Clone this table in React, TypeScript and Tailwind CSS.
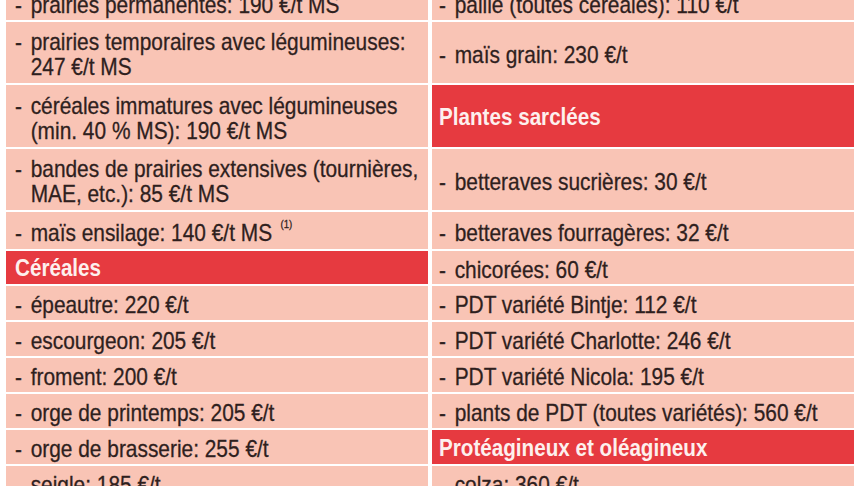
import React from "react";

type Cell =
  | { kind: "item"; lines: React.ReactNode[] }
  | { kind: "head"; text: string };

const item = (...lines: React.ReactNode[]): Cell => ({ kind: "item", lines });
const head = (text: string): Cell => ({ kind: "head", text });

const rowHeights = ["h-[34px]", "h-[61px]", "h-[62px]", "h-[61px]", "h-[37px]", "h-[33px]", "h-[34px]", "h-[34px]", "h-[34px]", "h-[34px]", "h-[34px]", "h-[34px]"];

const left: Cell[] = [
  item("prairies permanentes: 190 €/t MS"),
  item("prairies temporaires avec légumineuses:", "247 €/t MS"),
  item("céréales immatures avec légumineuses", "(min. 40 % MS): 190 €/t MS"),
  item("bandes de prairies extensives (tournières,", "MAE, etc.): 85 €/t MS"),
  item(
    <>
      maïs ensilage: 140 €/t MS <sup className="text-[11px] align-[7px] ml-[3px]">(1)</sup>
    </>
  ),
  head("Céréales"),
  item("épeautre: 220 €/t"),
  item("escourgeon: 205 €/t"),
  item("froment: 200 €/t"),
  item("orge de printemps: 205 €/t"),
  item("orge de brasserie: 255 €/t"),
  item("seigle: 185 €/t"),
];

const right: Cell[] = [
  item("paille (toutes céréales): 110 €/t"),
  item("maïs grain: 230 €/t"),
  head("Plantes sarclées"),
  item("betteraves sucrières: 30 €/t"),
  item("betteraves fourragères: 32 €/t"),
  item("chicorées: 60 €/t"),
  item("PDT variété Bintje: 112 €/t"),
  item("PDT variété Charlotte: 246 €/t"),
  item("PDT variété Nicola: 195 €/t"),
  item("plants de PDT (toutes variétés): 560 €/t"),
  head("Protéagineux et oléagineux"),
  item("colza: 360 €/t"),
];

function TableCell({ cell, h, pad }: { cell: Cell; h: string; pad: string }) {
  if (cell.kind === "head") {
    return (
      <div className={`${h} ${pad} flex items-center bg-[#e63a40] text-[#fdf0ee] font-bold text-[24px] leading-[25px]`}>
        <span className="scale-x-[0.86] origin-left whitespace-nowrap">{cell.text}</span>
      </div>
    );
  }
  return (
    <div className={`${h} ${pad} pt-[3px] flex items-center bg-[#f9c4b5] text-[#2f1f1e] text-[24px] [-webkit-text-stroke:0.3px_#2f1f1e]`}>
      <div className="flex leading-[25px] whitespace-nowrap scale-x-[0.87] origin-left">
        <span className="w-[18px] shrink-0">-</span>
        <span>
          {cell.lines.map((l, i) => (
            <React.Fragment key={i}>
              {i > 0 && <br />}
              {l}
            </React.Fragment>
          ))}
        </span>
      </div>
    </div>
  );
}

export default function App() {
  return (
    <main
      className="w-[864px] h-[486px] overflow-hidden bg-white"
      style={{ fontFamily: '"Liberation Sans", Arial, sans-serif' }}
    >
      <div className="mt-[-14px] ml-[6px] grid grid-cols-[422px_422px] gap-x-[4px] gap-y-[2px]">
        {left.map((c, i) => (
          <React.Fragment key={i}>
            <TableCell cell={c} h={rowHeights[i]} pad="pl-[9px]" />
            <TableCell cell={right[i]} h={rowHeights[i]} pad="pl-[7px]" />
          </React.Fragment>
        ))}
      </div>
    </main>
  );
}
